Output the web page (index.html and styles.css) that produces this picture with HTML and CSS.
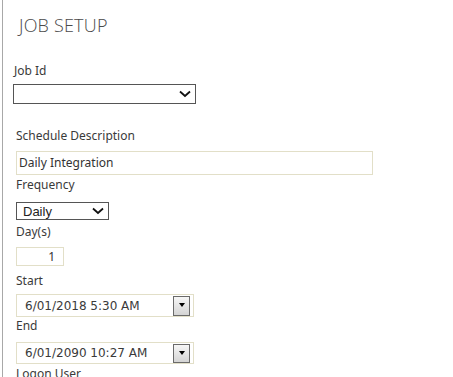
FILE: index.html
```html
<!DOCTYPE html>
<html>
<head>
<meta charset="utf-8">
<link rel="stylesheet" href="styles.css">
</head>
<body>
<div class="page">
  <h1 class="title">JOB SETUP</h1>
  <div class="field field-job">
    <div class="label">Job Id</div>
    <div class="select select-job"><span class="select-text"></span><svg class="chev" width="12" height="8" viewBox="0 0 12 8"><path d="M1 1.5 L6 6 L11 1.5" fill="none" stroke="#111" stroke-width="1.8"/></svg></div>
  </div>
  <div class="field field-desc">
    <div class="label">Schedule Description</div>
    <div class="input input-desc">Daily Integration</div>
  </div>
  <div class="field field-freq">
    <div class="label">Frequency</div>
    <div class="select select-freq"><span class="select-text">Daily</span><svg class="chev" width="12" height="8" viewBox="0 0 12 8"><path d="M1 1.5 L6 6 L11 1.5" fill="none" stroke="#111" stroke-width="1.8"/></svg></div>
  </div>
  <div class="field field-days">
    <div class="label">Day(s)</div>
    <div class="input input-days">1</div>
  </div>
  <div class="field field-start">
    <div class="label">Start</div>
    <div class="input input-date"><span class="date-text">6/01/2018 5:30 AM</span><span class="date-btn"><span class="tri"></span></span></div>
  </div>
  <div class="field field-end">
    <div class="label">End</div>
    <div class="input input-date input-date-end"><span class="date-text">6/01/2090 10:27 AM</span><span class="date-btn"><span class="tri"></span></span></div>
  </div>
  <div class="field field-logon">
    <div class="label">Logon User</div>
  </div>
</div>
</body>
</html>
```
FILE: styles.css
```css
html, body {
  margin: 0;
  padding: 0;
  background: #fff;
  overflow: hidden;
}
body {
  font-family: "Noto Sans", "Open Sans", sans-serif;
  color: #444;
}
.page {
  margin-left: 2px;
  border-left: 1px solid #a8a8a8;
  min-height: 377px;
  padding: 12px 0 0 10px;
}
.title {
  margin: 0 0 0 6px;
  font-family: "Open Sans", sans-serif;
  font-weight: 300;
  font-size: 18px;
  line-height: 26px;
  color: #4a4a4a;
  letter-spacing: 0.2px;
}
.field {
  display: flex;
  flex-direction: column;
  align-items: flex-start;
  padding-left: 3px;
}
.label {
  font-size: 12px;
  line-height: 16px;
  color: #3a3a3a;
}
.field-job { padding-left: 0; margin-top: 25px; }
.field-job .label { margin-left: 1px; margin-bottom: 5px; }
.field-desc { margin-top: 24px; }
.field-desc .label { margin-bottom: 7px; }
.field-freq { margin-top: 2px; }
.field-freq .label { margin-bottom: 9px; }
.field-days { margin-top: 4px; }
.field-days .label { margin-bottom: 7px; }
.field-start { margin-top: 7px; }
.field-start .label { margin-bottom: 5px; }
.field-end { margin-top: 1px; }
.field-end .label { margin-bottom: 8px; }
.field-logon { margin-top: 2px; }

.select {
  box-sizing: border-box;
  display: flex;
  align-items: center;
  justify-content: space-between;
  border: 1px solid #555;
  background: #fff;
}
.select-job {
  width: 183px;
  height: 20px;
  padding-right: 4px;
}
.select-freq {
  width: 93px;
  height: 18px;
  padding: 0 4px 0 6px;
}
.select-text {
  font-family: "Liberation Sans", Arial, sans-serif;
  font-size: 13px;
  color: #222;
}
.chev { display: block; }
.input {
  box-sizing: border-box;
  border: 1px solid #e2dfc8;
  background: #fff;
  font-size: 12px;
  color: #333;
}
.input-desc {
  width: 357px;
  height: 24px;
  line-height: 22px;
  padding-left: 2px;
}
.input-days {
  width: 48px;
  height: 19px;
  line-height: 17px;
  text-align: right;
  padding-right: 8px;
}
.input-date {
  width: 178px;
  height: 23px;
  display: flex;
  align-items: center;
  justify-content: space-between;
  padding: 0 3px 0 8px;
}
.input-date-end { height: 22px; }
.date-text {
  font-family: "DejaVu Sans", sans-serif;
  font-size: 12px;
  color: #3a3a3a;
}
.date-btn {
  box-sizing: border-box;
  width: 17px;
  height: 20px;
  border: 1px solid #6a6a6a;
  background: linear-gradient(#f6f6f6, #d4d4d4);
  display: flex;
  align-items: flex-start;
  justify-content: center;
  padding-top: 6px;
}
.input-date-end .date-btn { height: 19px; }
.tri {
  width: 0;
  height: 0;
  border-left: 3.5px solid transparent;
  border-right: 3.5px solid transparent;
  border-top: 4px solid #000;
}
```
